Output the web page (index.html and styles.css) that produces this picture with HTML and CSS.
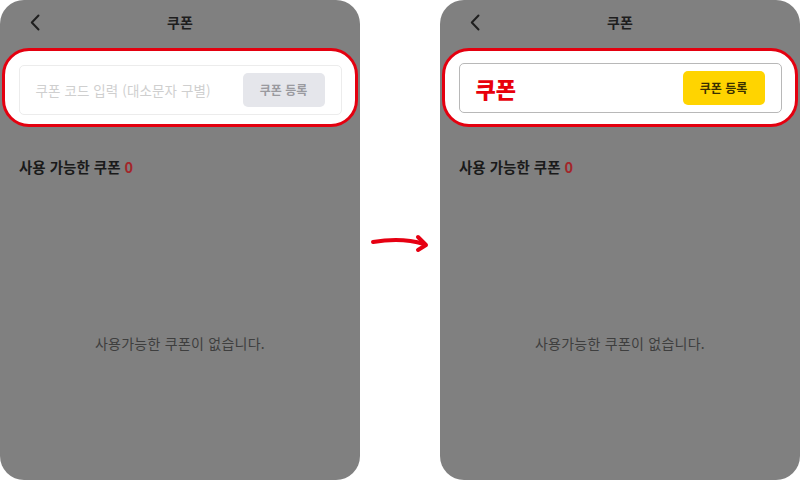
FILE: index.html
```html
<!DOCTYPE html>
<html lang="ko">
<head>
<meta charset="utf-8">
<title>쿠폰</title>
<link rel="stylesheet" href="styles.css">
</head>
<body>
<div class="stage">
  <section class="panel">
    <header class="topbar">
      <svg class="back" width="10" height="17" viewBox="0 0 10 17"><polyline points="8.5,1.5 1.8,8.5 8.5,15.5" fill="none" stroke="#1f1f1f" stroke-width="2" stroke-linecap="round" stroke-linejoin="round"/></svg>
      <h1 class="title">쿠폰</h1>
    </header>
    <div class="highlight">
      <div class="field">
        <span class="placeholder">쿠폰 코드 입력 (대소문자 구별)</span>
        <span class="btn btn-off">쿠폰 등록</span>
      </div>
    </div>
    <h2 class="count">사용 가능한 쿠폰 <span class="num">0</span></h2>
    <p class="empty">사용가능한 쿠폰이 없습니다.</p>
  </section>

  <div class="arrow">
    <svg width="80" height="30" viewBox="0 0 80 30"><path d="M13 16 C 30 13, 48 13, 64 18" fill="none" stroke="#e60012" stroke-width="4" stroke-linecap="round"/><path d="M58 11 L 66 19 L 58 24" fill="none" stroke="#e60012" stroke-width="4" stroke-linecap="round" stroke-linejoin="round"/></svg>
  </div>

  <section class="panel">
    <header class="topbar">
      <svg class="back" width="10" height="17" viewBox="0 0 10 17"><polyline points="8.5,1.5 1.8,8.5 8.5,15.5" fill="none" stroke="#1f1f1f" stroke-width="2" stroke-linecap="round" stroke-linejoin="round"/></svg>
      <h1 class="title">쿠폰</h1>
    </header>
    <div class="highlight highlight-after">
      <div class="field field-after">
        <span class="typed">쿠폰</span>
        <span class="btn btn-on">쿠폰 등록</span>
      </div>
    </div>
    <h2 class="count">사용 가능한 쿠폰 <span class="num">0</span></h2>
    <p class="empty">사용가능한 쿠폰이 없습니다.</p>
  </section>
</div>
</body>
</html>
```

FILE: styles.css
```css
html, body {
  margin: 0;
  padding: 0;
  background: #ffffff;
}
body {
  font-family: "Noto Sans CJK KR", "Noto Sans", sans-serif;
  width: 800px;
  height: 480px;
  overflow: hidden;
}
.stage {
  display: flex;
  width: 800px;
  height: 480px;
}
.panel {
  width: 360px;
  height: 480px;
  background: #808080;
  border-radius: 24px;
  display: flex;
  flex-direction: column;
  flex: none;
}
.arrow {
  width: 80px;
  display: flex;
  align-items: center;
  justify-content: center;
  padding-top: 2px;
}
.topbar {
  height: 46px;
  display: flex;
  align-items: center;
  justify-content: center;
  position: relative;
}
.back {
  position: absolute;
  left: 30px;
  top: 14px;
}
.title {
  margin: 0;
  font-size: 14px;
  font-weight: 700;
  color: #1e1e1e;
  line-height: 20px;
  padding-bottom: 3px;
}
.highlight {
  margin: 2px 2px 0;
  height: 79px;
  box-sizing: border-box;
  border: 3.5px solid #e4000f;
  border-radius: 27px;
  background: #ffffff;
  padding: 13.5px 13.5px 0;
}
.highlight-after {
  padding-top: 11.5px;
}
.field {
  height: 50px;
  box-sizing: border-box;
  border: 1px solid #ececec;
  border-radius: 5px;
  display: flex;
  align-items: center;
  justify-content: space-between;
  padding: 0 16px 0 16px;
}
.field-after {
  border-color: #b8b8b8;
  padding-right: 15px;
}
.placeholder {
  font-size: 13.5px;
  color: #cfcfcf;
  letter-spacing: 0.1px;
}
.typed {
  font-size: 22px;
  font-weight: 900;
  color: #e8000b;
  letter-spacing: 0;
}
.btn {
  width: 82px;
  height: 34px;
  border-radius: 5px;
  display: flex;
  align-items: center;
  justify-content: center;
  font-size: 12px;
  font-weight: 700;
}
.btn-off {
  background: #e5e6eb;
  color: #9a9a9f;
}
.btn-on {
  background: #ffd400;
  color: #3a3000;
  margin-right: 1px;
}
.count {
  margin: 30px 0 0 19px;
  font-size: 14.5px;
  font-weight: 700;
  line-height: 20px;
  color: #1a1a1a;
  letter-spacing: 0;
}
.num {
  color: #a3262a;
}
.empty {
  margin: 156px 0 0;
  text-align: center;
  font-size: 14px;
  line-height: 20px;
  color: #3e3e3e;
  letter-spacing: 0.25px;
}
```
